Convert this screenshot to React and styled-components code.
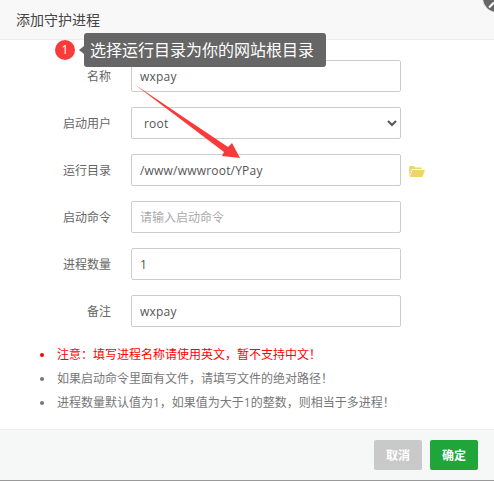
import React from 'react';
import styled, { createGlobalStyle } from 'styled-components';

const Global = createGlobalStyle`
    html, body {
        margin: 0;
        padding: 0;
        background: #fff;
    }
    body {
        font-family: 'Open Sans', 'Noto Sans CJK SC', sans-serif;
    }
`;

const Page = styled.div`
    position: relative;
    width: 494px;
    height: 481px;
    overflow: hidden;
    display: flex;
    flex-direction: column;
`;

const Header = styled.div`
    height: 39px;
    line-height: 39px;
    padding-left: 16px;
    font-size: 14px;
    color: #444;
    background: #f8f8f8;
    border-bottom: 1px solid #eee;
`;

const CloseDot = styled.div`
    position: absolute;
    top: -16px;
    left: 483px;
    width: 28px;
    height: 28px;
    border-radius: 50%;
    background: #666;
    box-shadow: 0 0 0 1px #e4e4e4;
`;

const CloseMark = styled.div`
    position: absolute;
    top: 20px;
    left: 5px;
    width: 7px;
    height: 2px;
    background: #fff;
    transform: rotate(-45deg);
`;

const Body = styled.div`
    flex: 1;
    padding-top: 20px;
    display: flex;
    flex-direction: column;
`;

const Form = styled.div`
    display: flex;
    flex-direction: column;
    gap: 15px;
`;

const Row = styled.div`
    display: flex;
    align-items: center;
    height: 32px;
`;

const Label = styled.label`
    width: 111px;
    margin-right: 20px;
    text-align: right;
    font-size: 12px;
    color: #666;
`;

const Input = styled.input`
    box-sizing: border-box;
    width: 270px;
    height: 32px;
    padding: 0 8px;
    border: 1px solid #ccc;
    border-radius: 2px;
    outline: none;
    font-family: inherit;
    font-size: 12px;
    letter-spacing: 0.2px;
    color: #555;
    background: #fff;

    &::placeholder {
        color: #aaa;
        letter-spacing: 0;
    }
`;

const Select = styled.select`
    box-sizing: border-box;
    width: 270px;
    height: 32px;
    padding: 0 8px;
    border: 1px solid #ccc;
    border-radius: 2px;
    outline: none;
    font-family: inherit;
    font-size: 12px;
    letter-spacing: 0.2px;
    color: #555;
    background: #fff;
`;

const FolderIcon = styled.svg`
    width: 16px;
    height: 11px;
    margin-left: 8px;
    margin-top: 2px;
`;

const Notes = styled.ul`
    list-style: none;
    margin: 16px 0 0;
    padding: 0 0 0 57px;
`;

const Note = styled.li`
    position: relative;
    height: 24px;
    line-height: 24px;
    font-size: 12px;
    color: ${props => props.$color};

    &::before {
        content: '';
        position: absolute;
        left: -17px;
        top: 10px;
        width: 4px;
        height: 4px;
        border-radius: 50%;
        background: ${props => props.$color};
    }
`;

const Footer = styled.div`
    box-sizing: border-box;
    height: 52px;
    display: flex;
    justify-content: flex-end;
    align-items: flex-start;
    gap: 8px;
    padding: 10px 16px 0 0;
    background: #f6f8f8;
    border-top: 1px solid #eee;
    border-bottom: 1px solid #999;
`;

const Button = styled.button`
    width: 48px;
    height: 30px;
    padding: 0;
    border: none;
    border-radius: 2px;
    font-family: inherit;
    font-size: 12px;
    font-weight: bold;
    color: #fff;
    background: ${props => props.$bg};
`;

const Badge = styled.div`
    position: absolute;
    left: 55px;
    top: 40px;
    width: 20px;
    height: 20px;
    border-radius: 50%;
    background: #f93a3a;
    color: #fff;
    font-size: 12px;
    line-height: 20px;
    text-align: center;
`;

const Tip = styled.div`
    position: absolute;
    left: 84px;
    top: 33px;
    width: 242px;
    height: 34px;
    box-sizing: border-box;
    padding-left: 6px;
    border-radius: 3px;
    background: #666;
    color: #fff;
    font-size: 16px;
    line-height: 34px;
    white-space: nowrap;

    &::before {
        content: '';
        position: absolute;
        left: -5px;
        top: 13px;
        border-style: solid;
        border-width: 4px 5px 4px 0;
        border-color: transparent #666 transparent transparent;
    }
`;

const Arrow = styled.svg`
    position: absolute;
    left: 0;
    top: 0;
    width: 494px;
    height: 481px;
    pointer-events: none;
`;

const fields = [
    { label: '名称', value: 'wxpay' },
    { label: '启动用户', select: 'root' },
    { label: '运行目录', value: '/www/wwwroot/YPay', folder: true },
    { label: '启动命令', placeholder: '请输入启动命令' },
    { label: '进程数量', value: '1' },
    { label: '备注', value: 'wxpay' },
];

const notes = [
    { text: '注意：填写进程名称请使用英文，暂不支持中文！', color: '#f00' },
    { text: '如果启动命令里面有文件，请填写文件的绝对路径！', color: '#777' },
    { text: '进程数量默认值为1，如果值为大于1的整数，则相当于多进程！', color: '#777' },
];

const App = () => {
    return <Page>
        <Global />
        <Header>添加守护进程</Header>
        <CloseDot><CloseMark /></CloseDot>
        <Body>
            <Form>
                {fields.map(f => <Row key={f.label}>
                    <Label>{f.label}</Label>
                    {f.select
                        ? <Select defaultValue={f.select}><option>{f.select}</option></Select>
                        : <Input readOnly value={f.value || ''} placeholder={f.placeholder} />}
                    {f.folder && <FolderIcon viewBox="0 0 16 11">
                        <path d="M0.5 11 L0 1.5 L1 0 H5 L6 1.5 H12.5 V3 H3 Z" fill="#edd56b" />
                        <path d="M3.5 4 H16 L13.5 11 H1 Z" fill="#edd56b" />
                    </FolderIcon>}
                </Row>)}
            </Form>
            <Notes>
                {notes.map(n => <Note key={n.text} $color={n.color}>{n.text}</Note>)}
            </Notes>
        </Body>
        <Footer>
            <Button $bg="#c9c9c9">取消</Button>
            <Button $bg="#20a53a">确定</Button>
        </Footer>
        <Badge>1</Badge>
        <Tip>选择运行目录为你的网站根目录</Tip>
        <Arrow viewBox="0 0 494 481">
            <polygon points="134,84 228,147 232,143 240,158 222,156 224,152" fill="#f93a3a" />
        </Arrow>
    </Page>
}

export default App;
